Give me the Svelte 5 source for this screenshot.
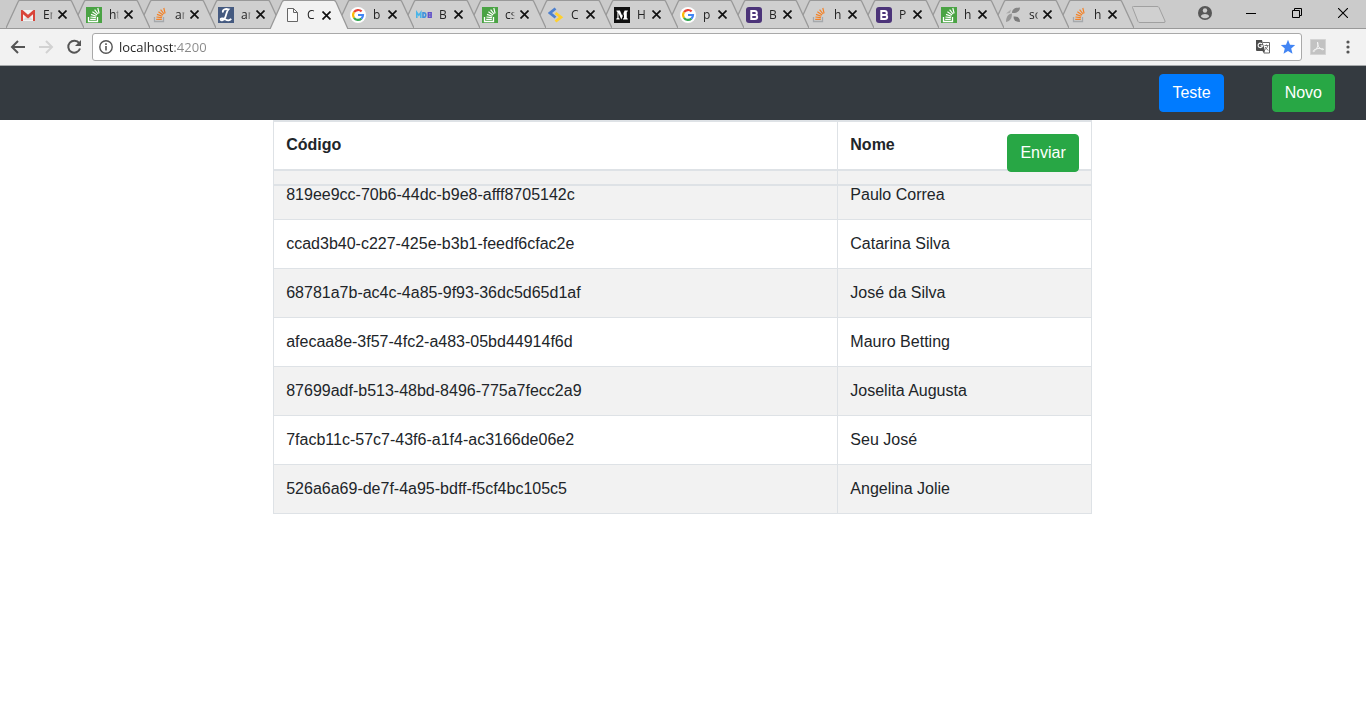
<script lang="ts">
	type Tab = { icon: string; title: string };

	const tabs: Tab[] = [
		{ icon: "gmail", title: "En" },
		{ icon: "stackgreen", title: "ht" },
		{ icon: "stack", title: "ar" },
		{ icon: "script", title: "ar" },
		{ icon: "page", title: "C" },
		{ icon: "google", title: "b" },
		{ icon: "mdb", title: "B" },
		{ icon: "stackgreen", title: "cs" },
		{ icon: "chevrons", title: "C" },
		{ icon: "medium", title: "H" },
		{ icon: "google", title: "p" },
		{ icon: "bootstrap", title: "B" },
		{ icon: "stack", title: "h" },
		{ icon: "bootstrap", title: "P" },
		{ icon: "stackgreen", title: "h" },
		{ icon: "leaves", title: "so" },
		{ icon: "stack", title: "h" },
	];

	const people = [
		{ id: "819ee9cc-70b6-44dc-b9e8-afff8705142c", name: "Paulo Correa" },
		{ id: "ccad3b40-c227-425e-b3b1-feedf6cfac2e", name: "Catarina Silva" },
		{ id: "68781a7b-ac4c-4a85-9f93-36dc5d65d1af", name: "José da Silva" },
		{ id: "afecaa8e-3f57-4fc2-a483-05bd44914f6d", name: "Mauro Betting" },
		{ id: "87699adf-b513-48bd-8496-775a7fecc2a9", name: "Joselita Augusta" },
		{ id: "7facb11c-57c7-43f6-a1f4-ac3166de06e2", name: "Seu José" },
		{ id: "526a6a69-de7f-4a95-bdff-f5cf4bc105c5", name: "Angelina Jolie" },
	];

	let active = $state(4);
	let url = $state("localhost:4200");
</script>

{#snippet papers(color: string, tray: string)}
	<path d="M2.5 10v4.5h9V10" fill="none" stroke={tray} stroke-width="1.3" />
	<path
		d="M4.2 12.4h5.6M4.4 10l5.5.7M5 7.4l5.3 1.8M6.4 4.8l4.7 3.1M8.6 2.6l3.5 4.4M11.8 1l1.3 5.3"
		fill="none"
		stroke={color}
		stroke-width="1.2"
	/>
{/snippet}

{#snippet favicon(name: string)}
	<svg class="favicon" viewBox="0 0 16 16" aria-hidden="true">
		{#if name === "gmail"}
			<path d="M1 3h14v11H1z" fill="#f2f2f2" />
			<path d="m3 13 5-5 5 5z" fill="#dcdcdc" />
			<path d="M1 14V3.5L8 9.5l7-6V14h-2V7.2L8 11.4 3 7.2V14z" fill="#d9453a" />
			<path d="M1 3h1.5L8 7.8 13.5 3H15v1.5L8 10.3 1 4.5z" fill="#d9453a" />
		{:else if name === "stackgreen"}
			<path d="M0 0h16v16H0z" fill="#4aa344" />
			{@render papers("#fff", "#fff")}
		{:else if name === "stack"}
			{@render papers("#f48024", "#a5a8ab")}
		{:else if name === "script"}
			<path d="M0 0h16v16H0z" fill="#455a80" />
			<path
				d="M5 5.5C4 2.5 7.5 1.5 10.5 2.3 8.5 4 8.5 8 7 11c-1 2.2-3.8 3-4.3 1.6-.4-1.4 2.4-1.7 4.4-.4 2.4 1.5 4.7 1.6 6.1-.4"
				fill="none"
				stroke="#fff"
				stroke-width="1.8"
			/>
		{:else if name === "page"}
			<path d="M3.5 1.5h6l4 4v9h-10z" fill="#fafafa" stroke="#666" />
			<path d="M9.5 1.5v4h4" fill="none" stroke="#666" />
		{:else if name === "google"}
			<circle cx="8" cy="8" r="8" fill="#fff" />
			<path d="M4 5.2A5 5 0 0 1 11.6 4.4" fill="none" stroke="#ea4335" stroke-width="2.2" />
			<path d="M4 10.8a5 5 0 0 1 0-5.6" fill="none" stroke="#fbbc05" stroke-width="2.2" />
			<path d="M11.4 11.7A5 5 0 0 1 4 10.8" fill="none" stroke="#34a853" stroke-width="2.2" />
			<path d="M8 8h5a5 5 0 0 1-1.6 3.7" fill="none" stroke="#4285f4" stroke-width="2.2" />
		{:else if name === "mdb"}
			<path d="M.8 11V5.500l2 2.700 2-2.700V11" fill="none" stroke="#4ab5e8" stroke-width="1.600" />
			<path d="M7 5.700v4.600h.8q2 0 2-2.300t-2-2.300z" fill="none" stroke="#3e92dd" stroke-width="1.600" />
			<path d="M12.300 5.700v4.600h2.900V5.700zm0 2.300h2.900" fill="none" stroke="#6152c9" stroke-width="1.400" />
		{:else if name === "chevrons"}
			<path d="M7.5 1.5 2 6l5.5 4.5" fill="none" stroke="#4d80ce" stroke-width="2.8" />
			<path d="M7.5 6 13 10.2 7.5 14.5" fill="none" stroke="#ffd02f" stroke-width="2.8" />
		{:else if name === "medium"}
			<path d="M0 0h16v16H0z" fill="#111" />
			<path
				d="M2.5 3.5h3.4L8.3 9l2.3-5.5h3.2v.7l-1 .8v6l1 .8v.7H9v-.7l1-.8V6l-2.7 6.4L4.5 6v4.8l1.2 1v.7H2.3v-.7l1.1-1V5l-.9-.8z"
				fill="#fff"
			/>
		{:else if name === "bootstrap"}
			<rect width="16" height="16" rx="3" fill="#4c3479" />
			<path
				d="M5.3 4v8h3.6c3 0 3-4 .2-4 2.4 0 2.3-4-.5-4zm0 4h3.8"
				fill="none"
				stroke="#fff"
				stroke-width="2"
			/>
		{:else}
			<path d="M6 6C6 2.500 9 .5 14 .5c0 3.500-3 6-8 5.500z" fill="#858585" />
			<path d="M0 15C0 10 2 7 6 6.500c0 4.500-1.500 7.500-6 8.500z" fill="#999" />
			<path d="M7.500 9.500c4-.5 6.500 1.500 6.500 5.500-4 0-6.500-1.500-6.500-5.500z" fill="#7c7c7c" />
			<path d="m0 6.500 5-4L4 6z" fill="#aaa" />
		{/if}
	</svg>
{/snippet}

<div class="strip">
	<div class="tabs">
		{#each tabs as tab, i}
			<div class="tab" class:active={i === active} style:z-index={i === active ? 30 : 20 - i}>
				<svg class="slope" viewBox="0 0 14 29" preserveAspectRatio="none" aria-hidden="true">
					<path class="fill" d="M0 29 12 1.500 14 0v29z" />
					<path class="line" d="M0 29 12 2Q12.500.5 14 .5" />
				</svg>
				<div class="body">
					<button class="pick" onclick={() => (active = i)}>
						{@render favicon(tab.icon)}
						<span class="title">{tab.title}</span>
					</button>
					<button class="close" aria-label="Fechar guia">
						<svg width="9" height="9" viewBox="0 0 9 9" aria-hidden="true">
							<path d="m.5.5 8 8m0-8-8 8" fill="none" stroke="#111" stroke-width="1.700" />
						</svg>
					</button>
				</div>
				<svg class="slope" viewBox="0 0 14 29" preserveAspectRatio="none" aria-hidden="true">
					<path class="fill" d="M14 29 2 1.500 0 0v29z" />
					<path class="line" d="M14 29 2 2Q1.500.5 0 .5" />
				</svg>
			</div>
		{/each}
	</div>
	<div class="window">
		<button aria-label="Nova guia">
			<svg width="36" height="20" viewBox="0 0 36 20" aria-hidden="true">
				<path
					d="M1.500 3.500Q1 2.500 2.500 2.500H26q1.500 0 2 1l6 13.500q.5 1.500-1 1.500H9q-1.500 0-2-1z"
					fill="#d0d0d0"
					stroke="#a0a0a0"
				/>
			</svg>
		</button>
		<button class="profile" aria-label="Perfil">
			<svg width="14" height="14" viewBox="0 0 14 14" aria-hidden="true">
				<circle cx="7" cy="7" r="7" fill="#575757" />
				<circle cx="7" cy="4.500" r="2.200" fill="#ccc" />
				<path d="M2.800 10.200C4 7.400 10 7.400 11.200 10.200 9.500 13 4.500 13 2.800 10.200z" fill="#ccc" />
			</svg>
		</button>
		<button class="control" aria-label="Minimizar">
			<svg width="10" height="10" viewBox="0 0 10 10" aria-hidden="true">
				<path d="M0 5.500h10" stroke="#000" />
			</svg>
		</button>
		<button class="control" aria-label="Restaurar">
			<svg width="10" height="10" viewBox="0 0 10 10" aria-hidden="true">
				<path d="M.5 2.500h7v7h-7zM2.500 2.500v-2h7v7h-2" fill="none" stroke="#000" />
			</svg>
		</button>
		<button class="control" aria-label="Fechar">
			<svg width="10" height="10" viewBox="0 0 10 10" aria-hidden="true">
				<path d="m0 0 10 10m0-10L0 10" stroke="#000" stroke-width="1.100" />
			</svg>
		</button>
	</div>
</div>

<div class="toolbar">
	<button aria-label="Voltar">
		<svg width="16" height="16" viewBox="0 0 16 16" aria-hidden="true">
			<path d="M15 8H2.500M8 2 2 8l6 6" fill="none" stroke="#555" stroke-width="2" />
		</svg>
	</button>
	<button aria-label="Avançar" disabled>
		<svg width="16" height="16" viewBox="0 0 16 16" aria-hidden="true">
			<path d="M1 8h12.500M8 2l6 6-6 6" fill="none" stroke="#d2d2d2" stroke-width="2" />
		</svg>
	</button>
	<button aria-label="Recarregar">
		<svg width="16" height="16" viewBox="0 0 16 16" aria-hidden="true">
			<path d="M13.200 4.200A6 6 0 1 0 14 9.500" fill="none" stroke="#555" stroke-width="2" />
			<path d="M15 1v6H9z" fill="#555" />
		</svg>
	</button>
	<div class="omnibox">
		<svg width="14" height="14" viewBox="0 0 14 14" aria-hidden="true">
			<circle cx="7" cy="7" r="6.200" fill="none" stroke="#555" stroke-width="1.400" />
			<path d="M7 6v4.500M7 3.300V5" stroke="#555" stroke-width="1.600" />
		</svg>
		<input type="text" aria-label="Endereço" spellcheck="false" bind:value={url} />
		<button aria-label="Traduzir">
			<svg width="16" height="16" viewBox="0 0 16 16" aria-hidden="true">
				<path d="M8 3.500h6.500v10.500H9" fill="#fff" stroke="#666" />
				<path d="M1 1h6l3 11H2q-1 0-1-1z" fill="#4d4d4d" />
				<path d="M7.200 5.200a2.200 2.200 0 1 0 .3 1.600H5.500" fill="none" stroke="#fff" stroke-width="1.100" />
				<path d="M9.500 6.500h4M11.500 5.500v1M12.800 6.500c-.5 2-1.500 3.300-3 4.200M10 8l3.200 3.500" fill="none" stroke="#777" />
				<path d="m7.500 12 1.500 2.500.8-2.500z" fill="#4d4d4d" />
			</svg>
		</button>
		<button aria-label="Favorito">
			<svg width="16" height="16" viewBox="0 0 16 16" aria-hidden="true">
				<path
					d="m8 .8 2 4.900 5.200.4-4 3.400 1.300 5.200L8 11.900l-4.500 2.800 1.300-5.200-4-3.400L6 5.700z"
					fill="#4285f4"
				/>
			</svg>
		</button>
	</div>
	<button aria-label="Adobe Acrobat">
		<svg width="16" height="16" viewBox="0 0 16 16" aria-hidden="true">
			<path d="M.5.5h15v15H.5z" fill="#c2c2c2" stroke="#d3d3d3" />
			<path
				d="M7.500 3c1.500 3-.5 7-3.500 9.500-1 .5-1.500-.5 0-1.500 3-2 7-2 9.500-1 .5 1-1 1-2 .5C9 9 7 6 7.500 3z"
				fill="none"
				stroke="#f4f4f4"
			/>
		</svg>
	</button>
	<button class="menu" aria-label="Menu">
		<svg width="4" height="14" viewBox="0 0 4 14" aria-hidden="true">
			<circle cx="2" cy="2" r="1.600" fill="#555" />
			<circle cx="2" cy="7" r="1.600" fill="#555" />
			<circle cx="2" cy="12" r="1.600" fill="#555" />
		</svg>
	</button>
</div>

<nav>
	<button class="btn primary">Teste</button>
	<button class="btn success">Novo</button>
</nav>

<main>
	<table>
		<thead>
			<tr>
				<th class="code" scope="col">Código</th>
				<th scope="col">Nome</th>
			</tr>
		</thead>
		<tbody>
			{#each people as person (person.id)}
				<tr>
					<td>{person.id}</td>
					<td>{person.name}</td>
				</tr>
			{/each}
		</tbody>
	</table>
	<div class="actions">
		<button class="btn success">Enviar</button>
	</div>
</main>

<style>
	:global(body) {
		margin: 0;
		background: #fff;
		font-family: "Liberation Sans", Arial, sans-serif;
	}

	button {
		margin: 0;
		padding: 0;
		border: 0;
		background: none;
		font: inherit;
	}

	svg {
		display: block;
		flex: none;
	}

	.strip {
		display: flex;
		height: 28px;
		padding-left: 6px;
		background: #cbcbcb;
		border-bottom: 1px solid #999;
		font-family: "Open Sans", "Noto Sans", sans-serif;
	}

	.tabs {
		display: flex;
		flex: 1;
		min-width: 0;
	}

	.tab {
		--tab-bg: #cfcfcf;
		position: relative;
		display: flex;
		flex: 1 1 0;
		min-width: 0;
		margin-right: -12px;

		&:nth-child(-n + 11) {
			flex: 0 1 78px;
		}

		&:last-child {
			margin-right: 0;
		}

		&.active {
			--tab-bg: #f2f2f2;
			margin-bottom: -1px;
		}
	}

	.slope {
		width: 14px;
		height: 100%;
	}

	.fill {
		fill: var(--tab-bg);
	}

	.line {
		fill: none;
		stroke: #999;
		stroke-width: 1.3;
	}

	.body {
		display: flex;
		flex: 1;
		min-width: 0;
		height: 100%;
		box-sizing: border-box;
		padding-right: 3px;
		background: var(--tab-bg);
		border-top: 1px solid #999;
	}

	.pick {
		display: flex;
		flex: 1;
		align-items: center;
		gap: 7px;
		min-width: 0;
		text-align: left;
	}

	.favicon {
		width: 16px;
		height: 16px;
	}

	.title {
		flex: 1;
		min-width: 0;
		overflow: hidden;
		font-size: 12px;
		line-height: 16px;
		color: #222;
		mask-image: linear-gradient(to right, #000 7px, transparent 10px);
	}

	.close {
		display: flex;
		align-items: center;
		padding-left: 5px;
	}

	.window {
		display: flex;
		align-items: center;
		width: 235px;
		margin-left: -3px;
	}

	.profile {
		margin: 0 16px 2px 31px;
	}

	.control {
		display: flex;
		flex: none;
		justify-content: center;
		width: 46px;
		padding-bottom: 2px;
	}

	.toolbar {
		display: flex;
		align-items: center;
		gap: 12px;
		height: 36px;
		padding: 0 16px 0 10px;
		background: #f2f2f2;
		border-bottom: 1px solid #a6a9ab;
	}

	.omnibox {
		display: flex;
		flex: 1;
		align-items: center;
		gap: 6px;
		height: 26px;
		padding: 0 5px 0 6px;
		margin: 0 -4px 0 -2px;
		background: #fff;
		border: 1px solid #a9a9a9;
		border-radius: 3px;

		& button + button {
			margin-left: 3px;
		}
	}

	input {
		flex: 1;
		min-width: 0;
		padding: 0;
		border: 0;
		outline: none;
		font-family: "Open Sans", "Noto Sans", sans-serif;
		font-size: 13px;
		line-height: 20px;
		color: transparent;
		caret-color: #222;
		background: linear-gradient(to right, #222 56px, #888 56px);
		background-clip: text;
	}

	.menu {
		margin-left: 8px;
	}

	nav {
		display: flex;
		justify-content: flex-end;
		gap: 48px;
		padding: 8px 31px;
		background: #343a40;
	}

	.btn {
		padding: 6px 12px;
		border: 1px solid transparent;
		border-radius: 4px;
		font-size: 16px;
		line-height: 24px;
		color: #fff;
		cursor: pointer;
	}

	.primary {
		background-color: #007bff;
		border-color: #007bff;
	}

	.success {
		background-color: #28a745;
		border-color: #28a745;
	}

	main {
		position: relative;
		width: calc(60% - 1px);
		margin: 0 20%;
	}

	table {
		width: 100%;
		table-layout: fixed;
		border-spacing: 0;
		border-right: 1px solid #dee2e6;
		font-size: 16px;
		line-height: 24px;
		color: #212529;
	}

	th,
	td {
		padding: 12px;
		text-align: left;
		border-left: 1px solid #dee2e6;
		border-bottom: 1px solid #dee2e6;
	}

	th {
		border-top: 1px solid #dee2e6;
		border-bottom-width: 2px;
	}

	.code {
		width: 69%;
		box-sizing: border-box;
	}

	tbody tr:nth-child(odd) {
		background-color: #f2f2f2;
	}

	/* second header row that floats over the first lines of the table */
	.actions {
		position: absolute;
		top: 0;
		left: 0;
		right: 0;
		display: flex;
		justify-content: flex-end;
		padding: 12px;
		border: 1px solid #dee2e6;
		border-width: 2px 1px;
	}
</style>
